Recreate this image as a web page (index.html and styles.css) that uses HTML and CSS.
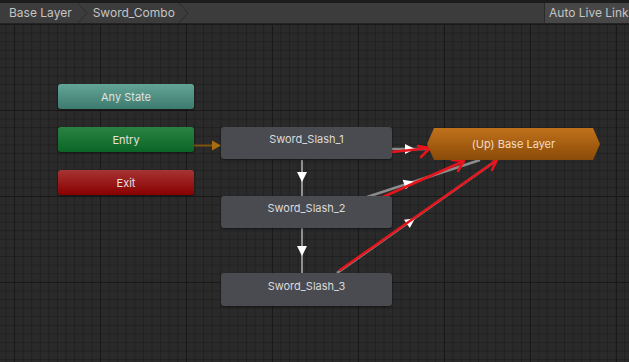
FILE: index.html
```html
<!DOCTYPE html>
<html>
<head>
<meta charset="utf-8">
<link rel="stylesheet" href="styles.css">
</head>
<body>
<div class="app">
  <div class="topstrip"></div>
  <div class="toolbar">
    <div class="crumb first">Base Layer</div>
    <svg class="chev" width="12" height="20" viewBox="0 0 12 20"><polyline points="1,0 10,10 1,20" fill="none" stroke="#2b2b2b" stroke-width="1"/></svg>
    <div class="crumb">Sword_Combo</div>
    <svg class="chev" width="12" height="20" viewBox="0 0 12 20"><polyline points="1,0 10,10 1,20" fill="none" stroke="#2b2b2b" stroke-width="1"/></svg>
    <div class="spacer"></div>
    <div class="live">Auto Live Link</div>
  </div>
  <div class="canvas">
    <svg class="links" width="629" height="338" viewBox="0 24 629 338">
      <!-- entry -->
      <line x1="194" y1="145.5" x2="214" y2="145.5" stroke="#7d5410" stroke-width="2"/>
      <polygon points="212,140.5 221,145.5 212,150.5" fill="#a86d0e"/>
      <!-- vertical -->
      <line x1="302" y1="160" x2="302" y2="197" stroke="#909090" stroke-width="2"/>
      <polygon points="297,172 307,172 302,182" fill="#ffffff"/>
      <line x1="302" y1="228" x2="302" y2="273" stroke="#909090" stroke-width="2"/>
      <polygon points="297,246 307,246 302,256" fill="#ffffff"/>
      <!-- to up -->
      <line x1="392" y1="149" x2="428" y2="149" stroke="#8c8c8c" stroke-width="2.5"/>
      <polygon points="-5,-5 5,0 -5,5" fill="#ffffff" transform="translate(410,149)"/>
      <line x1="367" y1="197" x2="480" y2="160" stroke="#8c8c8c" stroke-width="2.5"/>
      <polygon points="-5,-5 5,0 -5,5" fill="#ffffff" transform="translate(409,183) rotate(-18)"/>
      <line x1="337" y1="273" x2="497" y2="160" stroke="#8c8c8c" stroke-width="2.5"/>
      <polygon points="-5,-5 5,0 -5,5" fill="#ffffff" transform="translate(411,221) rotate(-35)"/>
      <!-- red annotations -->
      <g fill="none" stroke="#e8141c" stroke-width="2.5" stroke-linecap="round" stroke-linejoin="round">
        <path d="M392 152 L430 148 M418 146 L430 148 L421 157"/>
        <path d="M376 200 L464 161 M452 160 L464 161 L458 171"/>
        <path d="M340 270 L497 160 M485 158 L497 160 L492 170"/>
      </g>
    </svg>
    <div class="node any">Any State</div>
    <div class="node entry">Entry</div>
    <div class="node exit">Exit</div>
    <div class="node state s1">Sword_Slash_1</div>
    <div class="node state s2">Sword_Slash_2</div>
    <div class="node state s3">Sword_Slash_3</div>
    <div class="node up">(Up) Base Layer</div>
  </div>
</div>
</body>
</html>
```
FILE: styles.css
```css
html, body {
  margin: 0;
  padding: 0;
  width: 629px;
  height: 362px;
  overflow: hidden;
  background: #282828;
  font-family: Inter, "Noto Sans", sans-serif;
}
.app {
  display: flex;
  flex-direction: column;
  width: 629px;
  height: 362px;
}
.topstrip {
  height: 3px;
  background: #1c1c1c;
}
.toolbar {
  height: 20px;
  display: flex;
  align-items: center;
  background: #3c3c3c;
  border-bottom: 1px solid #232323;
  color: #c4c4c4;
  font-size: 12px;
}
.crumb {
  padding: 0 3px 0 3px;
  line-height: 20px;
  white-space: nowrap;
}
.crumb.first {
  padding-left: 9px;
  padding-right: 5px;
}
.chev {
  flex: none;
  margin-right: 1px;
}
.spacer { flex: 1; }
.live {
  background: #474747;
  border-left: 1px solid #2a2a2a;
  height: 20px;
  line-height: 20px;
  padding-left: 4px;
  width: 80px;
  white-space: nowrap;
  overflow: hidden;
}
.canvas {
  position: relative;
  flex: 1;
  background-color: #2a2a2a;
  background-image:
    linear-gradient(to right, #191919 1px, transparent 1px),
    linear-gradient(to bottom, #191919 1px, transparent 1px),
    linear-gradient(to right, #212121 1px, transparent 1px),
    linear-gradient(to bottom, #212121 1px, transparent 1px);
  background-size: 86px 86px, 86px 86px, 8.6px 8.6px, 8.6px 8.6px;
  background-position: 14px 0, 0 0, 5.4px 0, 0 0;
  border-left: 3px solid #232323;
  margin-left: -3px;
}
.links {
  position: absolute;
  left: 0;
  top: 0;
}
.node {
  position: absolute;
  display: flex;
  align-items: center;
  justify-content: center;
  box-sizing: border-box;
  font-size: 11px;
  color: #e2e2e2;
  border-radius: 3px;
  box-shadow: 0 1px 2px rgba(0,0,0,0.5);
}
.any {
  left: 58px; top: 60px; width: 136px; height: 25px;
  background: linear-gradient(#63a597, #3e7a6e);
}
.entry {
  left: 58px; top: 103px; width: 136px; height: 25px;
  background: linear-gradient(#2a8342, #0b6526);
}
.exit {
  left: 58px; top: 146px; width: 136px; height: 25px;
  background: linear-gradient(#a63434, #8a0000);
}
.state {
  left: 221px; width: 171px; height: 32px;
  padding-bottom: 8px;
  background: #4a4b50;
  color: #dadada;
}
.s1 { top: 103px; }
.s2 { top: 172px; }
.s3 { top: 249px; height: 33px; }
.up {
  left: 427px; top: 104px; width: 173px; height: 32px;
  background: linear-gradient(#c0721b, #8a4a08);
  color: #f3dcc4;
  border-radius: 0;
  box-shadow: none;
  clip-path: polygon(7px 0, calc(100% - 7px) 0, 100% 50%, calc(100% - 7px) 100%, 7px 100%, 0 50%);
}
```
